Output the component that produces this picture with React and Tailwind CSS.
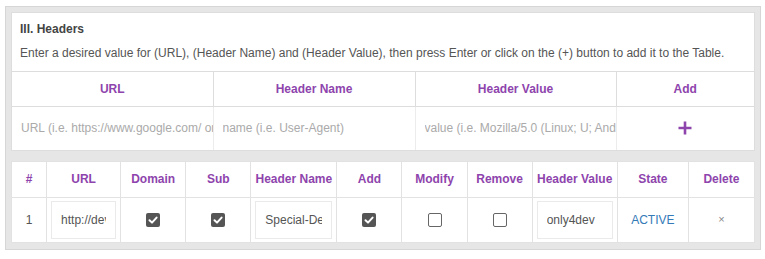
import { useState } from "react";

const purple = "text-[#8e44ad]";

function CheckBox({ checked }) {
  if (checked) {
    return (
      <span className="mx-auto flex h-[14px] w-[14px] items-center justify-center rounded-[2px] bg-[#555]">
        <svg viewBox="0 0 14 14" className="h-[14px] w-[14px]">
          <path d="M3.5 7.2 L6 9.6 L10.6 4.6" fill="none" stroke="#fff" strokeWidth="2" strokeLinecap="round" strokeLinejoin="round" />
        </svg>
      </span>
    );
  }
  return <span className="mx-auto block h-[14px] w-[14px] rounded-[2px] border-[1.5px] border-[#666] bg-white" />;
}

const mainCols = [
  ["#", "w-[35px]"],
  ["URL", "w-[74px]"],
  ["Domain", "w-[65px]"],
  ["Sub", "w-[65px]"],
  ["Header Name", "w-[86px]"],
  ["Add", "w-[65px]"],
  ["Modify", "w-[65px]"],
  ["Remove", "w-[65px]"],
  ["Header Value", "w-[85px]"],
  ["State", "w-[71px]"],
  ["Delete", "w-[66px]"],
];

export default function App() {
  const [row] = useState({
    url: "http://dev.only4dev.com",
    domain: true,
    sub: true,
    name: "Special-Dev",
    add: true,
    modify: false,
    remove: false,
    value: "only4dev",
  });

  return (
    <div className="bg-white pl-[5px] pt-[6px] text-[12px] text-[#555] [font-family:'Liberation_Sans',Arial,sans-serif]">
      <div className="w-[756px] border border-[#d6d6d6] bg-[#e6e6e6] px-[5px] pt-[5px] pb-[6px]">
        <div className="border border-[#ddd] bg-white">
          <div className="px-[8px] pt-[8px] text-[12px] font-bold leading-[16px] text-[#444]">III. Headers</div>
          <p className="mt-[7px] px-[8px] leading-[18px] text-[#555]">
            Enter a desired value for (URL), (Header Name) and (Header Value), then press Enter or click on the (+) button to add it to the Table.
          </p>
          <table className="mt-[9px] w-full table-fixed border-collapse">
            <thead>
              <tr className="h-[35px]">
                <th className={`w-[201px] border border-l-0 border-[#ddd] font-bold ${purple}`}>URL</th>
                <th className={`w-[202px] border border-[#ddd] font-bold ${purple}`}>Header Name</th>
                <th className={`w-[201px] border border-[#ddd] font-bold ${purple}`}>Header Value</th>
                <th className={`border border-r-0 border-[#ddd] font-bold ${purple}`}>Add</th>
              </tr>
            </thead>
            <tbody>
              <tr className="h-[43px]">
                <td className="border-r border-[#ececec] pl-[9px]">
                  <input className="w-full bg-transparent outline-none placeholder:text-[#aaa]" placeholder="URL (i.e. https://www.google.com/ or http://dev.only4dev.com)" />
                </td>
                <td className="border-r border-[#ececec] pl-[9px]">
                  <input className="w-full bg-transparent outline-none placeholder:text-[#aaa]" placeholder="name (i.e. User-Agent)" />
                </td>
                <td className="border-r border-[#ececec] pl-[9px]">
                  <input className="w-full bg-transparent outline-none placeholder:text-[#aaa]" placeholder="value (i.e. Mozilla/5.0 (Linux; U; Android 4.0.3))" />
                </td>
                <td className="text-center">
                  <button className="mx-auto flex h-[20px] w-[20px] items-center justify-center">
                    <svg viewBox="0 0 16 16" className="h-[16px] w-[16px]">
                      <path d="M8 1.5 V14.5 M1.5 8 H14.5" stroke="#8e44ad" strokeWidth="2.6" fill="none" />
                    </svg>
                  </button>
                </td>
              </tr>
            </tbody>
          </table>
        </div>

        <table className="mt-[10px] w-full table-fixed border-collapse border border-[#ddd] bg-white">
          <thead>
            <tr className="h-[36px]">
              {mainCols.map(([label, w]) => (
                <th key={label} className={`${w} border border-[#e2e2e2] px-0 font-bold whitespace-nowrap ${purple}`}>
                  {label}
                </th>
              ))}
            </tr>
          </thead>
          <tbody>
            <tr className="h-[45px] text-center">
              <td className="border border-[#e2e2e2]">1</td>
              <td className="border border-[#e2e2e2] px-[4px]">
                <input readOnly value={row.url} className="h-[38px] w-full border border-[#eaeaea] px-[9px] text-[#555] outline-none" />
              </td>
              <td className="border border-[#e2e2e2]"><CheckBox checked={row.domain} /></td>
              <td className="border border-[#e2e2e2]"><CheckBox checked={row.sub} /></td>
              <td className="border border-[#e2e2e2] px-[4px]">
                <input readOnly value={row.name} className="h-[38px] w-full border border-[#eaeaea] px-[9px] text-[#555] outline-none" />
              </td>
              <td className="border border-[#e2e2e2]"><CheckBox checked={row.add} /></td>
              <td className="border border-[#e2e2e2]"><CheckBox checked={row.modify} /></td>
              <td className="border border-[#e2e2e2]"><CheckBox checked={row.remove} /></td>
              <td className="border border-[#e2e2e2] px-[4px]">
                <input readOnly value={row.value} className="h-[38px] w-full border border-[#eaeaea] px-[9px] text-[#555] outline-none" />
              </td>
              <td className="border border-[#e2e2e2] text-[#337ab7]">ACTIVE</td>
              <td className="border border-[#e2e2e2] text-[11px] text-[#888]">×</td>
            </tr>
          </tbody>
        </table>
      </div>
    </div>
  );
}
